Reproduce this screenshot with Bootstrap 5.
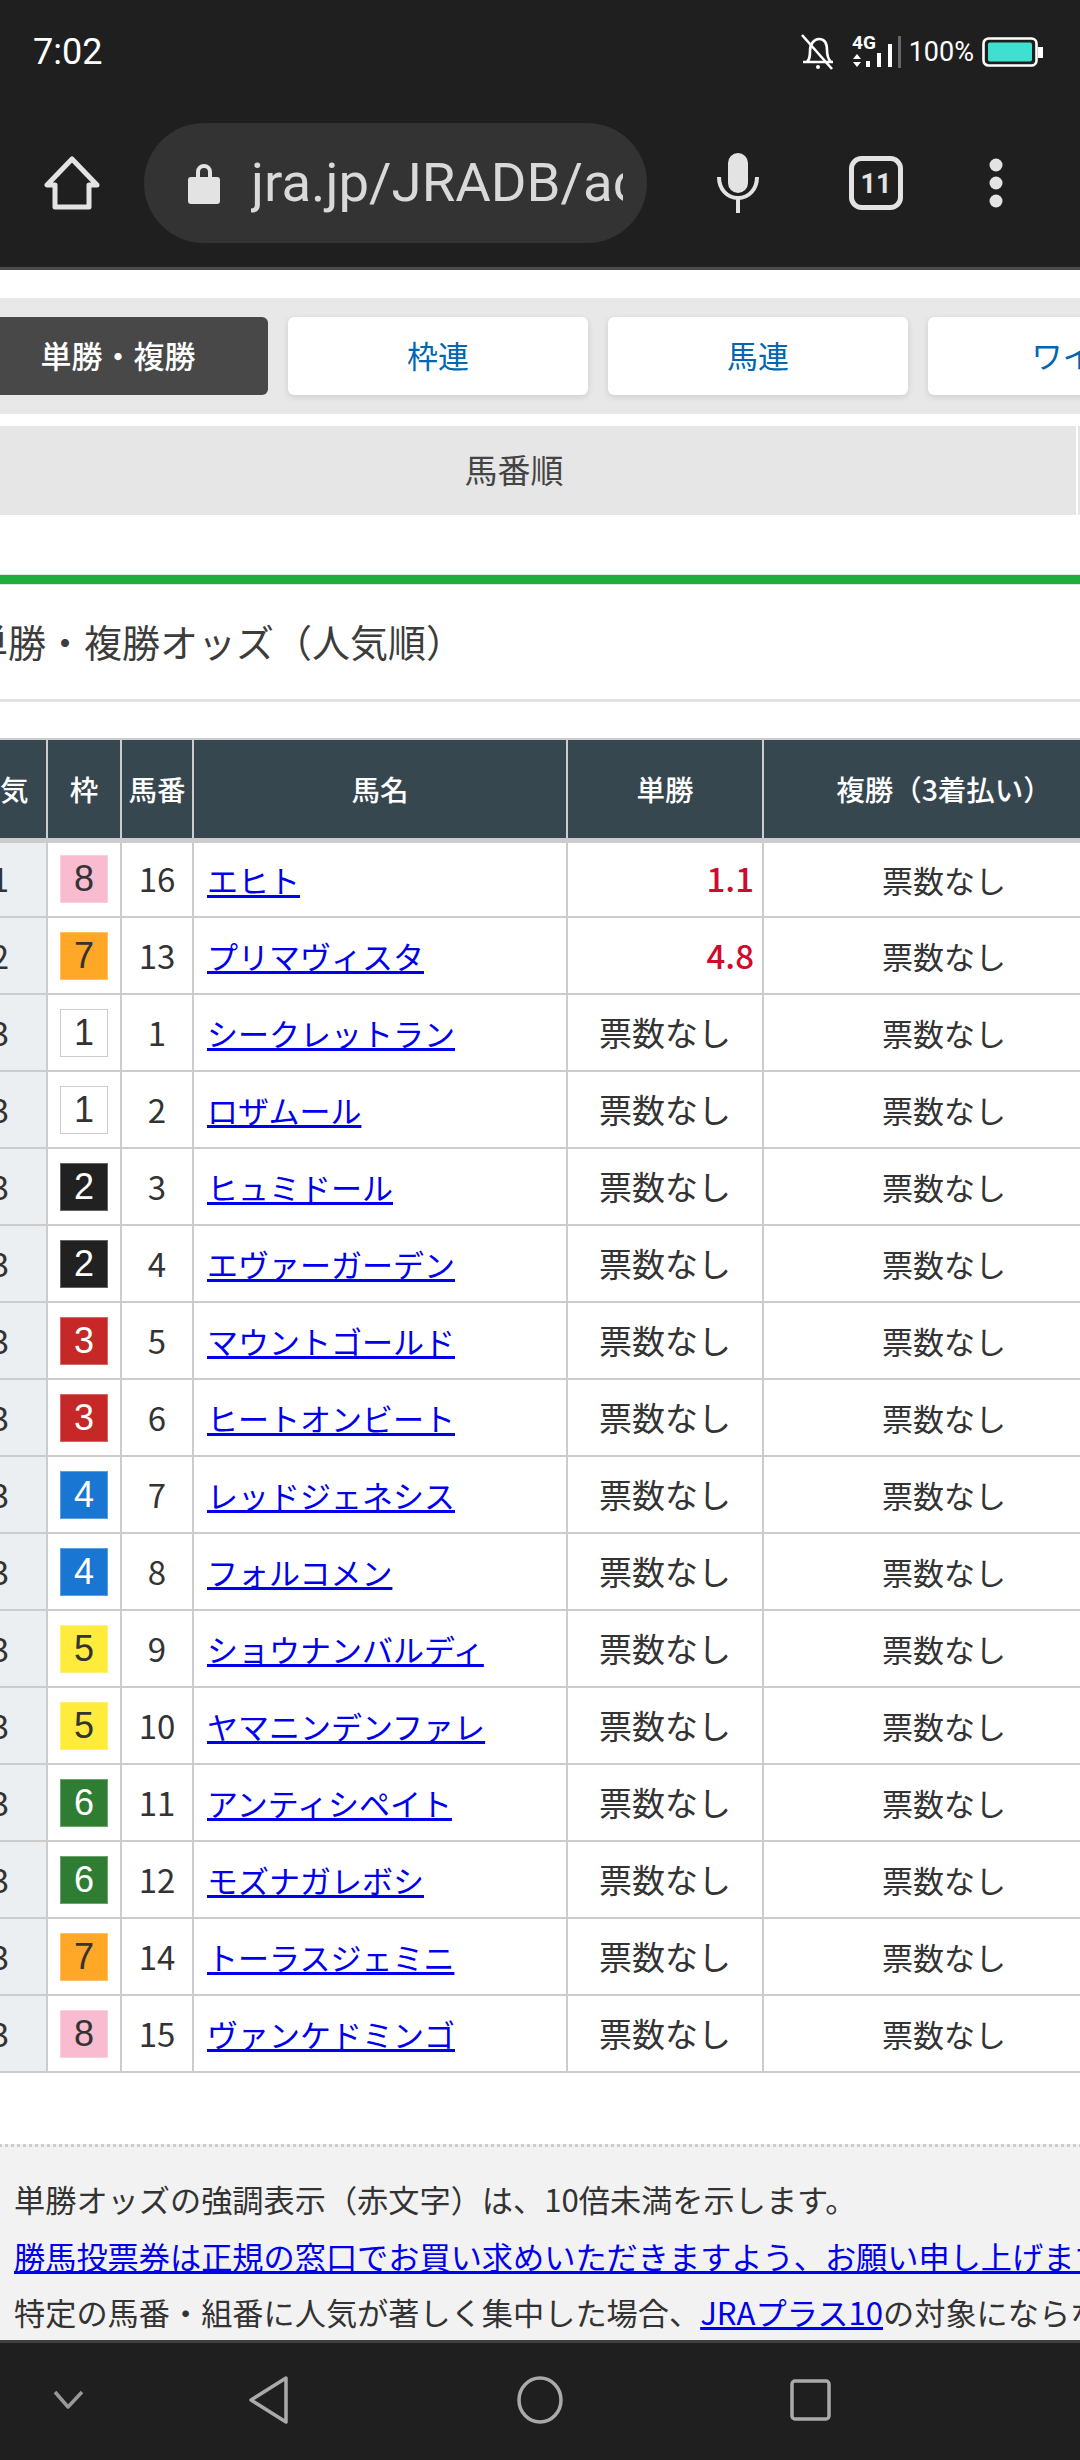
<!DOCTYPE html>
<html lang="ja">
<head>
  <meta charset="UTF-8" />
  <meta name="viewport" content="width=device-width, initial-scale=1.0"/>
  <title>単勝・複勝オッズ</title>
  <link href="https://cdn.jsdelivr.net/npm/bootstrap@5.3.0/dist/css/bootstrap.min.css" rel="stylesheet">
  <style>
    html, body { height: 2460px; overflow: hidden; }
    body { width: 1080px; background: #fff; color: #333; font-family: "Noto Sans CJK JP", "Noto Sans", sans-serif; }

    /* android + browser chrome */
    .phone-top { height: 270px; background: #1f1f1f; border-bottom: 3px solid #4a4a4a; color: #e3e3e3; flex: none; }
    .status-row { height: 104px; padding: 0 37px 0 33px; color: #fff; font-family: Roboto, sans-serif; }
    .status-time { font-size: 36px; }
    .status-pct { font-size: 27px; margin: 0 8px 0 0; }
    .status-sep { width: 3px; height: 32px; background: #666; }
    .tool-row { height: 120px; margin-top: 19px; }
    .tool-home { width: 144px; }
    .url-pill { width: 503px; height: 120px; border-radius: 60px; background: #333; padding: 0 24px 0 44px; }
    .url-text { font-family: Roboto, sans-serif; font-size: 54.5px; line-height: 1.2; margin-left: 31px; white-space: nowrap; overflow: hidden; width: 372px; color: #d9d9d9; }
    .tool-mic { width: 43px; margin-left: 69px; }
    .tool-tabs { margin-left: 90px; }
    .tool-dots { margin-left: 86px; }

    /* page, scrolled sideways by 48px */
    .page-area { flex: 1 1 auto; min-height: 0; overflow: hidden; }
    .page-shift { margin-left: -48px; width: 1172px; padding-top: 28px; }
    .race-tabs { background: #e8e8e8; height: 116px; padding: 19px 16px; gap: 20px; }
    .race-tab { width: 300px; height: 78px; flex: none; background: #fff; border-radius: 6px; box-shadow: 0 2px 6px rgba(0,0,0,.12); color: #0067b0; font-size: 31px; line-height: 76px; text-align: center; text-decoration: none; }
    .race-tab-on { background: #484848; color: #fff; font-weight: 500; box-shadow: none; }
    .sort-bar { margin-top: 12px; height: 89px; gap: 2px; }
    .sort-item { width: 1124px; flex: none; background: #e6e6e6; color: #444; font-size: 33px; line-height: 87px; text-align: center; }
    .green-line { margin-top: 60px; height: 9px; background: #1fae3c; box-shadow: 0 0 0 1px #d8e8da; }
    .odds-title { height: 118px; margin: 0; padding-left: 18px; font-size: 38px; line-height: 113px; font-weight: 400; color: #3c3c3c; border-bottom: 3px solid #e3e3e3; }

    .odds-table { margin: 36px 0 0; width: 1172px; table-layout: fixed; border-collapse: collapse; color: #333; }
    .odds-table > :not(caption) > * > * { padding: 0; border: 2px solid #ccc; height: 77px; font-size: 31px; font-weight: 400; text-align: center; vertical-align: middle; line-height: 1.2; box-shadow: none; background: #fff; color: #333; }
    .odds-table thead th { height: 101px; background: #37474f; color: #fff; font-size: 28.5px; font-weight: 500; border-bottom-width: 5px; }
    .odds-table tbody td.pop-cell { background: #eceff1; font-size: 33px; }
    .odds-table td.num-cell { font-size: 33px; }
    .odds-table td.win-cell { font-size: 33px; }
    .odds-table td.name-cell { text-align: left; padding-left: 13px; }
    .odds-table td.odds-low { text-align: right; padding-right: 8px; color: #cf0a2c; font-weight: 500; font-size: 33px; }
    .name-cell a, .foot-note a { color: #00e; }
    .w-pop { width: 94px; } .w-frame { width: 74px; } .w-num { width: 72px; }
    .w-name { width: 374px; } .w-win { width: 196px; } .w-place { width: 362px; }

    .frame-box { display: block; width: 48px; height: 48px; margin: 0 auto; font-size: 36px; line-height: 46px; font-family: "Liberation Sans", sans-serif; border: 1px solid rgba(255,255,255,.3); }
    .fr1 { background: #fff; border-color: #ccc; }
    .fr2 { background: #212121; color: #fff; }
    .fr3 { background: #c62828; color: #fff; }
    .fr4 { background: #1976d2; color: #fff; }
    .fr5 { background: #ffeb3b; }
    .fr6 { background: #2e7d32; color: #fff; }
    .fr7 { background: #ffa726; }
    .fr8 { background: #f8bbd0; }

    .foot-note { margin-top: 71px; height: 200px; background: #f2f2f2; border-top: 3px dotted #ccc; padding: 24px 0 0 62px; font-size: 31.2px; line-height: 56.5px; white-space: nowrap; color: #333; }

    .phone-nav { height: 120px; flex: none; background: #1f1f1f; border-top: 3px solid #3e4244; }
  </style>
</head>
<body class="d-flex flex-column">

<!-- Browser chrome -->
<header class="phone-top">
  <div class="status-row d-flex align-items-center justify-content-between">
    <span class="status-time">7:02</span>
    <div class="d-flex align-items-center">
      <svg width="36" height="38" viewBox="0 0 36 38" fill="none" stroke="#fff" stroke-width="2.6"><path d="M3 29h30M7 29c3-3 3-6 3-11 0-7 4-12 9-12s8 4 8 11c0 6 1 9 4 12"/><path d="M2 2l30 34"/><circle cx="18" cy="34" r="2" fill="#fff" stroke="none"/></svg>
      <svg class="ms-3" width="46" height="36" viewBox="0 0 46 36" fill="#fff"><text x="0" y="15" font-family="Roboto" font-size="19" font-weight="700">4G</text><path d="M5 20l4 5H1zM5 33l-4-5h8z"/><rect x="14" y="27" width="4" height="6"/><rect x="25" y="19" width="4" height="14"/><rect x="36" y="10" width="4" height="23"/></svg>
      <span class="status-sep me-2"></span>
      <span class="status-pct">100%</span>
      <svg width="61" height="30" viewBox="0 0 61 30"><rect x="1.500" y="1.500" width="53" height="27" rx="5" fill="none" stroke="#fff" stroke-width="2.6"/><rect x="6" y="5.500" width="44" height="19" rx="2" fill="#40e0d0"/><rect x="56" y="10" width="5" height="11" fill="#fff"/></svg>
    </div>
  </div>
  <div class="tool-row d-flex align-items-center">
    <div class="tool-home d-flex justify-content-center">
      <svg width="56" height="54" viewBox="0 0 56 54" fill="none" stroke="#e3e3e3" stroke-width="5" stroke-linejoin="round"><path d="M28 3L3 29h8v22h34V29h8z"/></svg>
    </div>
    <div class="url-pill d-flex align-items-center">
      <svg width="32" height="42" viewBox="0 0 32 42" fill="#e3e3e3"><path d="M8 16v-6a8 8 0 0116 0v6h-4v-6a4 4 0 00-8 0v6z"/><rect x="0" y="15" width="32" height="27" rx="3"/></svg>
      <div class="url-text">jra.jp/JRADB/accessO</div>
    </div>
    <div class="tool-mic">
      <svg width="44" height="60" viewBox="0 0 44 60" fill="#e3e3e3"><rect x="12" y="0" width="20" height="40" rx="10"/><path d="M3 24c0 12 8 21 19 21s19-9 19-21" fill="none" stroke="#e3e3e3" stroke-width="4"/><rect x="20" y="44" width="4" height="16"/></svg>
    </div>
    <div class="tool-tabs d-flex align-items-center justify-content-center">
      <svg width="54" height="54" viewBox="0 0 54 54" fill="none" stroke="#e3e3e3" stroke-width="5"><rect x="2.500" y="2.500" width="49" height="49" rx="10"/><text x="27" y="37" text-anchor="middle" font-family="Roboto" font-size="27" font-weight="700" fill="#e3e3e3" stroke="none">11</text></svg>
    </div>
    <div class="tool-dots">
      <svg width="14" height="50" viewBox="0 0 14 50" fill="#e3e3e3"><circle cx="7" cy="7" r="6.500"/><circle cx="7" cy="25" r="6.500"/><circle cx="7" cy="43" r="6.500"/></svg>
    </div>
  </div>
</header>

<!-- Page -->
<main class="page-area">
  <div class="page-shift">
    <nav class="race-tabs d-flex">
      <a class="race-tab race-tab-on" href="#">単勝・複勝</a>
      <a class="race-tab" href="#">枠連</a>
      <a class="race-tab" href="#">馬連</a>
      <a class="race-tab" href="#">ワイド</a>
    </nav>
    <div class="sort-bar d-flex">
      <div class="sort-item">馬番順</div>
      <div class="sort-item">人気順</div>
    </div>
    <div class="green-line"></div>
    <h2 class="odds-title">単勝・複勝オッズ（人気順）</h2>
    <table class="table odds-table">
      <colgroup>
        <col class="w-pop"><col class="w-frame"><col class="w-num"><col class="w-name"><col class="w-win"><col class="w-place">
      </colgroup>
      <thead>
        <tr><th>人気</th><th>枠</th><th>馬番</th><th>馬名</th><th>単勝</th><th>複勝（3着払い）</th></tr>
      </thead>
      <tbody id="oddsRows"></tbody>
    </table>
    <div class="foot-note">
      <div>単勝オッズの強調表示（赤文字）は、10倍未満を示します。</div>
      <div><a href="#">勝馬投票券は正規の窓口でお買い求めいただきますよう、お願い申し上げます。</a></div>
      <div>特定の馬番・組番に人気が著しく集中した場合、<a href="#">JRAプラス10</a>の対象にならない場合があります。</div>
    </div>
  </div>
</main>

<!-- Android nav -->
<footer class="phone-nav d-flex align-items-center">
  <svg width="1080" height="117" viewBox="0 0 1080 117" fill="none" stroke="#aaa" stroke-width="3.500" stroke-linejoin="round">
    <path d="M55 49l13 15 14-15" stroke="#999"/>
    <path d="M286 35L251 57l35 22z"/>
    <ellipse cx="540" cy="57" rx="21" ry="22"/>
    <rect x="792" y="38" width="37" height="38" rx="3"/>
  </svg>
</footer>

<script>
  const horses = [
    [1, 8, 16, 'エヒト', '1.1'],
    [2, 7, 13, 'プリマヴィスタ', '4.8'],
    [3, 1, 1, 'シークレットラン'],
    [3, 1, 2, 'ロザムール'],
    [3, 2, 3, 'ヒュミドール'],
    [3, 2, 4, 'エヴァーガーデン'],
    [3, 3, 5, 'マウントゴールド'],
    [3, 3, 6, 'ヒートオンビート'],
    [3, 4, 7, 'レッドジェネシス'],
    [3, 4, 8, 'フォルコメン'],
    [3, 5, 9, 'ショウナンバルディ'],
    [3, 5, 10, 'ヤマニンデンファレ'],
    [3, 6, 11, 'アンティシペイト'],
    [3, 6, 12, 'モズナガレボシ'],
    [3, 7, 14, 'トーラスジェミニ'],
    [3, 8, 15, 'ヴァンケドミンゴ']
  ]

  const tbody = document.getElementById('oddsRows')
  horses.forEach(h => {
    const win = h[4]
      ? `<td class="odds-low">${h[4]}</td>`
      : '<td class="win-cell">票数なし</td>'
    tbody.innerHTML += `
      <tr>
        <td class="pop-cell">${h[0]}</td>
        <td><span class="frame-box fr${h[1]}">${h[1]}</span></td>
        <td class="num-cell">${h[2]}</td>
        <td class="name-cell"><a href="#">${h[3]}</a></td>
        ${win}
        <td>票数なし</td>
      </tr>`
  })
</script>
</body>
</html>
